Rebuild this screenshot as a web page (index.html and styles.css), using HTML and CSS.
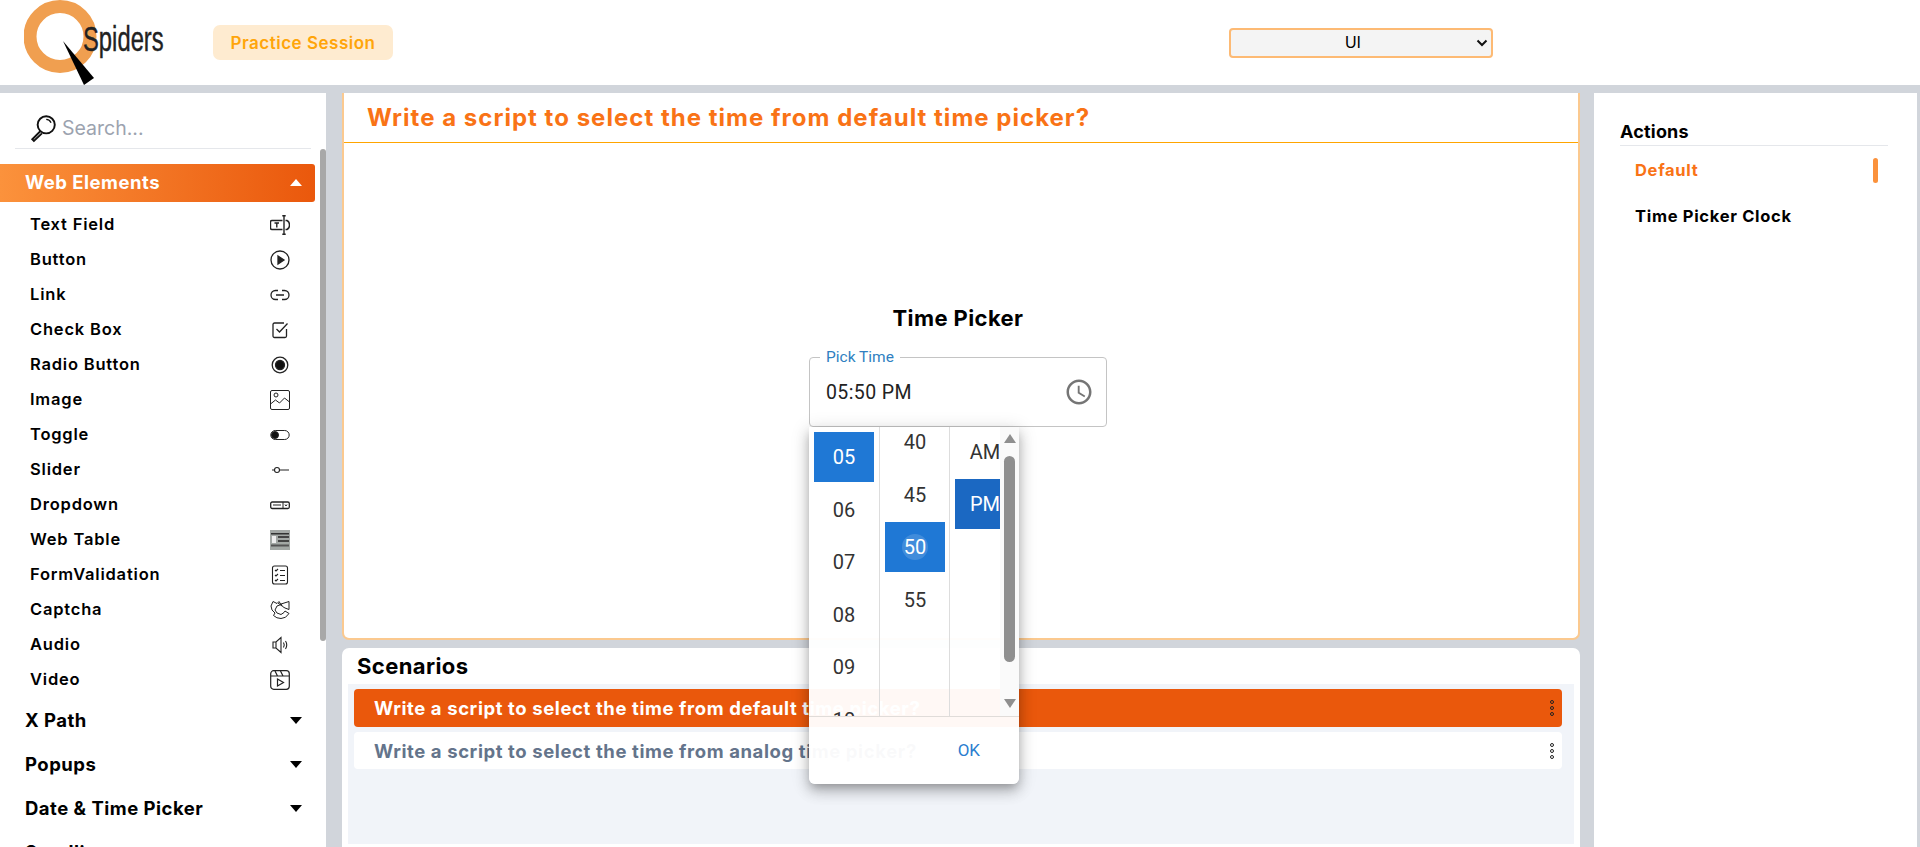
FILE: index.html
```html
<!DOCTYPE html>
<html lang="en">
<head>
    <meta charset="UTF-8">
    <meta name="viewport" content="width=device-width, initial-scale=1.0">
    <title>Time Picker</title>
    <link rel="stylesheet" href="styles.css">
</head>
<body>
    <header class="topbar">
        <div class="logo">
            <svg class="logo-mark" width="80" height="86" viewBox="0 0 80 86">
                <circle cx="36" cy="36.500" r="30" fill="none" stroke="#f09f50" stroke-width="13"/>
                <polygon points="39,41 70,78 60,85" fill="#000"/>
            </svg>
            <span class="logo-text">Spiders</span>
        </div>
        <div class="badge">Practice Session</div>
        <div class="select-wrap">
            <div class="select-box">
                <span>UI</span>
                <svg class="select-arrow" width="12" height="8" viewBox="0 0 12 8"><path d="M1.500 1.500 6 6l4.500-4.500" fill="none" stroke="#111" stroke-width="2"/></svg>
            </div>
        </div>
    </header>

    <div class="content">
        <aside class="sidebar">
            <div class="search">
                <svg width="30" height="30" viewBox="0 0 28 28" fill="none" stroke="#111" stroke-width="1.800">
                    <circle cx="17" cy="11" r="8"/>
                    <path d="M11.500 17 4 24.500l1.500 1.500L13 19"/>
                    <path d="M17 6a5 5 0 0 1 4.500 3" stroke-width="1.200"/>
                </svg>
                <span>Search...</span>
            </div>
            <div class="sidebar-scroll">
                <div class="group-head active">Web Elements<i class="tri up"></i></div>
                <ul class="menu">
                    <li>Text Field
                        <svg viewBox="0 0 20 20" fill="none" stroke="#222" stroke-width="1.400"><path d="M12.500 5.500H2a1.500 1.500 0 0 0-1.500 1.500v6A1.500 1.500 0 0 0 2 14.500h10.500M15.500 5.500h1.500q2.500 1 2.500 4.500t-2.500 4.500h-1.500M14 .8v18.400M12.300 .8h3.400M12.300 19.200h3.400M4.500 8h4.500M6.800 8v4.500"/></svg>
                    </li>
                    <li>Button
                        <svg viewBox="0 0 20 20" fill="none" stroke="#222" stroke-width="1.300"><circle cx="10" cy="10" r="9"/><path d="M8 6l6 4-6 4z" fill="#222"/></svg>
                    </li>
                    <li>Link
                        <svg viewBox="0 0 20 20" fill="none" stroke="#222" stroke-width="1.300"><path d="M8 5.500H5.500a4.500 4.500 0 0 0 0 9H8M12 5.500h2.500a4.500 4.500 0 0 1 0 9H12M6 10h8"/></svg>
                    </li>
                    <li>Check Box
                        <svg viewBox="0 0 20 20" fill="none" stroke="#222" stroke-width="1.300"><path d="M16.500 9v7a1.500 1.500 0 0 1-1.500 1.500H4.500A1.500 1.500 0 0 1 3 16V4.500A1.500 1.500 0 0 1 4.500 3H14"/><path d="M6.500 9l3 3 8-8.500"/></svg>
                    </li>
                    <li>Radio Button
                        <svg viewBox="0 0 20 20" fill="none" stroke="#222" stroke-width="1.300"><circle cx="10" cy="10" r="7.800"/><circle cx="10" cy="10" r="4.500" fill="#111"/></svg>
                    </li>
                    <li>Image
                        <svg viewBox="0 0 20 20" fill="none" stroke="#222" stroke-width="1"><rect x="0.500" y="0.500" width="19" height="19" rx="1.500"/><circle cx="6" cy="5" r="2"/><path d="M0.500 14l5-4 4 3 5-5 5 4"/></svg>
                    </li>
                    <li>Toggle
                        <svg viewBox="0 0 20 20" fill="none" stroke="#222" stroke-width="1"><rect x="0.800" y="5.500" width="18.400" height="9" rx="4.500"/><circle cx="5" cy="10" r="3.500" fill="#111"/></svg>
                    </li>
                    <li>Slider
                        <svg viewBox="0 0 20 20" fill="none" stroke="#222" stroke-width="1.100"><circle cx="7" cy="10" r="2.500"/><path d="M2 10h2.500M9.500 10H19"/></svg>
                    </li>
                    <li>Dropdown
                        <svg viewBox="0 0 20 20" fill="none" stroke="#222" stroke-width="1.300"><rect x="0.700" y="7" width="18.600" height="6.500" rx="1.500"/><path d="M3 10h8M13 7v6.500M15 9.500l1 1.500 1-1.500" stroke-width="1"/></svg>
                    </li>
                    <li>Web Table
                        <svg viewBox="0 0 20 20"><rect width="20" height="20" fill="#a3a8a5"/><rect x="1" y="3" width="18" height="1.500" fill="#333"/><rect x="8" y="6" width="11" height="2" fill="#444"/><rect x="8" y="10" width="11" height="2" fill="#444"/><rect x="1" y="14.500" width="18" height="2" fill="#555"/><rect x="2" y="6" width="4" height="7" fill="#eee"/></svg>
                    </li>
                    <li>FormValidation
                        <svg viewBox="0 0 20 20" fill="none" stroke="#222" stroke-width="1.100"><rect x="2.500" y="1" width="15" height="18" rx="2"/><path d="M5 5l1 1 2-2M5 10l1 1 2-2M5 15l1 1 2-2M10 5.500h5M10 10.500h5M10 15.500h5"/></svg>
                    </li>
                    <li>Captcha
                        <svg viewBox="0 0 20 20" fill="none" stroke="#222" stroke-width="1"><path d="M1 6l2-4.500 4 2 2-2 2 3-4 1.500-2 4 2 3 4 1.500 3-2 1-1.500 4 2.500q-3 5-8 5-4.500 0-7.500-3l1.500-2.500-3-3z"/><path d="M11 4l8-2.500v8l-4-1.500-2.500-1.500zM8 3l4 3"/></svg>
                    </li>
                    <li>Audio
                        <svg viewBox="0 0 20 20" fill="none" stroke="#222" stroke-width="1.100"><path d="M3 7h3l5-4.500v15L6 13H3zM6 7v6M13.500 7.500q1.500 2.500 0 5M15.500 6q2.500 4 0 8"/></svg>
                    </li>
                    <li>Video
                        <svg viewBox="0 0 20 20" fill="none" stroke="#222" stroke-width="1.200"><rect x="0.700" y="0.700" width="18.600" height="18.600" rx="3"/><path d="M1 6h18M5 1l2.500 5M10.500 1 13 6M7.500 9v7l6-3.500z"/></svg>
                    </li>
                </ul>
                <div class="group-head">X Path<i class="tri"></i></div>
                <div class="group-head">Popups<i class="tri"></i></div>
                <div class="group-head">Date &amp; Time Picker<i class="tri"></i></div>
                <div class="group-head">Scrolling<i class="tri"></i></div>
            </div>
        </aside>

        <main class="center">
            <section class="stage">
                <h1 class="stage-title">Write a script to select the time from default time picker?</h1>
                <div class="stage-body">
                    <h2 class="picker-title">Time Picker</h2>
                    <div class="picker-field">
                        <label class="picker-label">Pick Time</label>
                        <span class="picker-value">05:50 PM</span>
                        <svg class="clock" width="30" height="30" viewBox="0 0 24 24" fill="#757575"><path d="M11.990 2C6.470 2 2 6.480 2 12s4.470 10 9.990 10C17.520 22 22 17.520 22 12S17.520 2 11.990 2zM12 20c-4.420 0-8-3.580-8-8s3.580-8 8-8 8 3.580 8 8-3.580 8-8 8zm.5-13H11v6l5.250 3.150.75-1.230-4.500-2.670z"/></svg>
                    </div>
                </div>
            </section>

            <section class="scenarios">
                <h3>Scenarios</h3>
                <div class="scenario-list">
                    <div class="scenario active">Write a script to select the time from default time picker?
                        <span class="dots"><i></i><i></i><i></i></span>
                    </div>
                    <div class="scenario">Write a script to select the time from analog time picker?
                        <span class="dots"><i></i><i></i><i></i></span>
                    </div>
                </div>
            </section>
        </main>

        <aside class="actions">
            <h3>Actions</h3>
            <div class="action current">Default<i class="marker"></i></div>
            <div class="action">Time Picker Clock</div>
        </aside>
    </div>

    <div class="popup">
        <div class="popup-cols">
            <ul class="col hours">
                <li class="on">05</li>
                <li>06</li>
                <li>07</li>
                <li>08</li>
                <li>09</li>
                <li>10</li>
            </ul>
            <ul class="col minutes">
                <li>40</li>
                <li>45</li>
                <li class="on"><span class="ripple">50</span></li>
                <li>55</li>
            </ul>
            <div class="col-last">
                <ul class="col ampm">
                    <li>AM</li>
                    <li class="on">PM</li>
                </ul>
                <div class="bar">
                    <i class="bar-up"></i>
                    <i class="bar-thumb"></i>
                    <i class="bar-down"></i>
                </div>
            </div>
        </div>
        <div class="popup-foot"><span>OK</span></div>
    </div>
</body>
</html>
```

FILE: styles.css
```css
* {
    box-sizing: border-box;
}
html, body {
    height: 100%;
}
body {
    margin: 0;
    height: 847px;
    overflow: hidden;
    background: #d1d5db;
    font-family: Inter, "Open Sans", sans-serif;
    color: #000;
    display: flex;
    flex-direction: column;
}
h1, h2, h3, ul {
    margin: 0;
    padding: 0;
}
ul {
    list-style: none;
}

/* top bar */
.topbar {
    height: 85px;
    flex: none;
    background: #fff;
    display: flex;
    align-items: center;
    padding-left: 24px;
}
.logo {
    width: 189px;
    height: 85px;
    flex: none;
    display: flex;
    align-items: flex-start;
}
.logo-mark {
    flex: none;
}
.logo-text {
    margin: 19px 0 0 -21px;
    font-family: "Liberation Sans", sans-serif;
    font-size: 35px;
    color: #222;
    -webkit-text-stroke: .4px #222;
    display: inline-block;
    transform: scaleX(.68);
    transform-origin: left top;
}
.badge {
    width: 180px;
    height: 35px;
    background: #feebd0;
    border-radius: 7px;
    color: #ffa50a;
    font-size: 17px;
    font-weight: 600;
    letter-spacing: .5px;
    display: flex;
    align-items: center;
    justify-content: center;
}
.select-wrap {
    margin-left: 836px;
}
.select-box {
    width: 264px;
    height: 30px;
    background: #f4f4f4;
    border: 2px solid #fdba74;
    border-radius: 4px;
    font-family: "Liberation Sans", sans-serif;
    font-size: 16px;
    display: flex;
    align-items: center;
    justify-content: center;
    padding-right: 16px;
    position: relative;
}
.select-arrow {
    position: absolute;
    right: 3px;
    top: 9px;
}

/* columns */
.content {
    flex: 1;
    min-height: 0;
    margin-top: 8px;
    display: flex;
}

/* left menu */
.sidebar {
    width: 326px;
    flex: none;
    background: #fff;
    display: flex;
    flex-direction: column;
}
.search {
    height: 56px;
    margin: 0 15px;
    padding: 14px 0 0 13px;
    border-bottom: 1px solid #e5e7eb;
    display: flex;
    align-items: center;
    gap: 4px;
    color: #9ca3af;
    font-size: 19.500px;
}
.sidebar-scroll {
    flex: 1;
    min-height: 0;
    overflow: hidden;
    padding-top: 15px;
    position: relative;
}
.sidebar-scroll::after {
    content: "";
    position: absolute;
    right: 0;
    top: 0;
    width: 6px;
    height: 492px;
    background: #a8a8a8;
    border-radius: 3px;
}
.group-head {
    width: 315px;
    height: 44px;
    padding: 0 13px 0 25px;
    display: flex;
    align-items: center;
    justify-content: space-between;
    font-size: 18.500px;
    font-weight: 700;
    letter-spacing: .5px;
}
.group-head.active {
    height: 38px;
    margin-bottom: 4px;
    padding-bottom: 2px;
    color: #fff;
    background: linear-gradient(90deg, #fb923c, #ea580c);
    border-radius: 0 3px 3px 0;
}
.tri {
    width: 0;
    height: 0;
    border-left: 6px solid transparent;
    border-right: 6px solid transparent;
    border-top: 7px solid #000;
}
.tri.up {
    border-top: 0;
    border-bottom: 7px solid #fff;
}
.menu {
    margin-bottom: 2px;
}
.menu li {
    width: 290px;
    height: 35px;
    padding-left: 30px;
    display: flex;
    align-items: center;
    justify-content: space-between;
    font-size: 16.500px;
    font-weight: 600;
    letter-spacing: .8px;
}
.menu svg {
    width: 20px;
    height: 20px;
    margin-top: 2px;
}

/* center */
.center {
    width: 1238px;
    margin: 0 14px 0 16px;
    flex: none;
    display: flex;
    flex-direction: column;
    gap: 8px;
}
.stage {
    height: 547px;
    flex: none;
    background: #fff;
    border: 2px solid #fbc98f;
    border-top: 0;
    border-radius: 0 0 7px 7px;
    display: flex;
    flex-direction: column;
}
.stage-title {
    height: 50px;
    flex: none;
    padding: 0 0 1px 23px;
    border-bottom: 1px solid #ffa500;
    display: flex;
    align-items: center;
    color: #f97316;
    font-size: 24px;
    font-weight: 700;
    letter-spacing: 1.020px;
}
.stage-body {
    flex: 1;
    display: flex;
    flex-direction: column;
    align-items: center;
    padding: 160px 6px 0 0;
}
.picker-title {
    margin-bottom: 24px;
    font-size: 22px;
    font-weight: 700;
    letter-spacing: .4px;
    line-height: 30px;
}
.picker-field {
    width: 298px;
    height: 70px;
    padding: 0 12px 0 16px;
    border: 1px solid #c4c4c4;
    border-radius: 4px;
    display: flex;
    align-items: center;
    justify-content: space-between;
    font-family: Roboto, sans-serif;
    position: relative;
}
.picker-label {
    position: absolute;
    left: 10px;
    top: -10px;
    padding: 0 6px;
    background: #fff;
    font-size: 15.500px;
    line-height: 18px;
    color: #2f7fc1;
}
.picker-value {
    font-size: 19.500px;
    color: #222;
    letter-spacing: .4px;
}

/* scenarios */
.scenarios {
    flex: 1;
    min-height: 0;
    background: #fff;
    border-radius: 7px 7px 0 0;
    padding: 0 6px 3px;
    display: flex;
    flex-direction: column;
}
.scenarios h3 {
    height: 35px;
    margin-bottom: 1px;
    flex: none;
    padding-left: 9px;
    font-size: 22px;
    font-weight: 700;
    letter-spacing: .4px;
    display: flex;
    align-items: center;
}
.scenario-list {
    flex: 1;
    background: #f1f4f9;
    padding: 5px 12px 0 6px;
    display: flex;
    flex-direction: column;
    gap: 5px;
}
.scenario {
    height: 37px;
    padding: 0 8px 0 20px;
    background: #fff;
    border-radius: 4px;
    color: #64748b;
    font-size: 18.500px;
    font-weight: 700;
    letter-spacing: .6px;
    display: flex;
    align-items: center;
    justify-content: space-between;
}
.scenario.active {
    height: 38px;
    background: #ea580c;
    color: #fff;
}
.dots {
    display: flex;
    flex-direction: column;
    gap: 2px;
}
.dots i {
    width: 4px;
    height: 4px;
    border: 1px solid #222;
    border-radius: 50%;
}

/* right panel */
.actions {
    width: 323px;
    flex: none;
    background: #fff;
    padding: 27px 29px 0 26px;
}
.actions h3 {
    height: 26px;
    border-bottom: 1px solid #e5e7eb;
    font-size: 18px;
    font-weight: 700;
    letter-spacing: .2px;
    line-height: 24px;
}
.action {
    height: 46px;
    padding: 0 10px 0 15px;
    display: flex;
    align-items: center;
    justify-content: space-between;
    font-size: 16.500px;
    font-weight: 700;
    letter-spacing: .7px;
}
.action.current {
    height: 46px;
    margin-top: 1px;
    color: #f97316;
}
.marker {
    width: 5px;
    height: 25px;
    background: #fb923c;
    border-radius: 3px;
}

/* time picker popup */
.popup {
    position: absolute;
    left: 809px;
    top: 427px;
    width: 210px;
    height: 357px;
    background: rgba(255, 255, 255, .96);
    border-radius: 0 0 6px 6px;
    box-shadow: 0 5px 10px -3px rgba(0, 0, 0, .25), 0 8px 14px 1px rgba(0, 0, 0, .14), 0 3px 18px 2px rgba(0, 0, 0, .12);
    font-family: Roboto, sans-serif;
    font-size: 20px;
    color: #333;
}
.popup-cols {
    height: 290px;
    border-bottom: 1px solid #e0dcd9;
    display: flex;
}
.col {
    width: 70px;
    height: 289px;
    padding: 5px 5px 0;
    overflow: hidden;
    border-right: 1px solid #ddd;
    flex: none;
}
.col.hours {
    width: 71px;
}
.col li {
    width: 60px;
    height: 50px;
    margin-bottom: 2.500px;
    display: flex;
    align-items: center;
    justify-content: center;
    flex: none;
}
.col li.on {
    background: #1f78d5;
    color: #fff;
}
.col.minutes {
    padding-top: 0;
}
.col.minutes li:first-child {
    margin-top: -10px;
}
.ripple {
    width: 26px;
    height: 26px;
    border-radius: 50%;
    background: rgba(255, 255, 255, .15);
    display: flex;
    align-items: center;
    justify-content: center;
}
.col-last {
    width: 69px;
    display: flex;
}
.col.ampm {
    width: 50px;
    border: 0;
    padding: 0 0 0 5px;
}
.col.ampm li:first-child {
    margin-bottom: 2px;
}
.col.ampm li.on {
    background: #1b68c2;
}
.bar {
    width: 19px;
    height: 289px;
    background: #fafafa;
    display: flex;
    flex-direction: column;
    align-items: center;
    padding-top: 7px;
}
.bar-up {
    border-left: 6px solid transparent;
    border-right: 6px solid transparent;
    border-bottom: 9px solid #8f8f8f;
}
.bar-thumb {
    width: 11px;
    height: 206px;
    margin-top: 13px;
    background: #8f8f8f;
    border-radius: 6px;
}
.bar-down {
    margin-top: 37px;
    border-left: 6px solid transparent;
    border-right: 6px solid transparent;
    border-top: 9px solid #8f8f8f;
}
.popup-foot {
    height: 66px;
    padding-right: 39px;
    display: flex;
    align-items: center;
    justify-content: flex-end;
    color: #2a7dcf;
    font-size: 17px;
}
```
